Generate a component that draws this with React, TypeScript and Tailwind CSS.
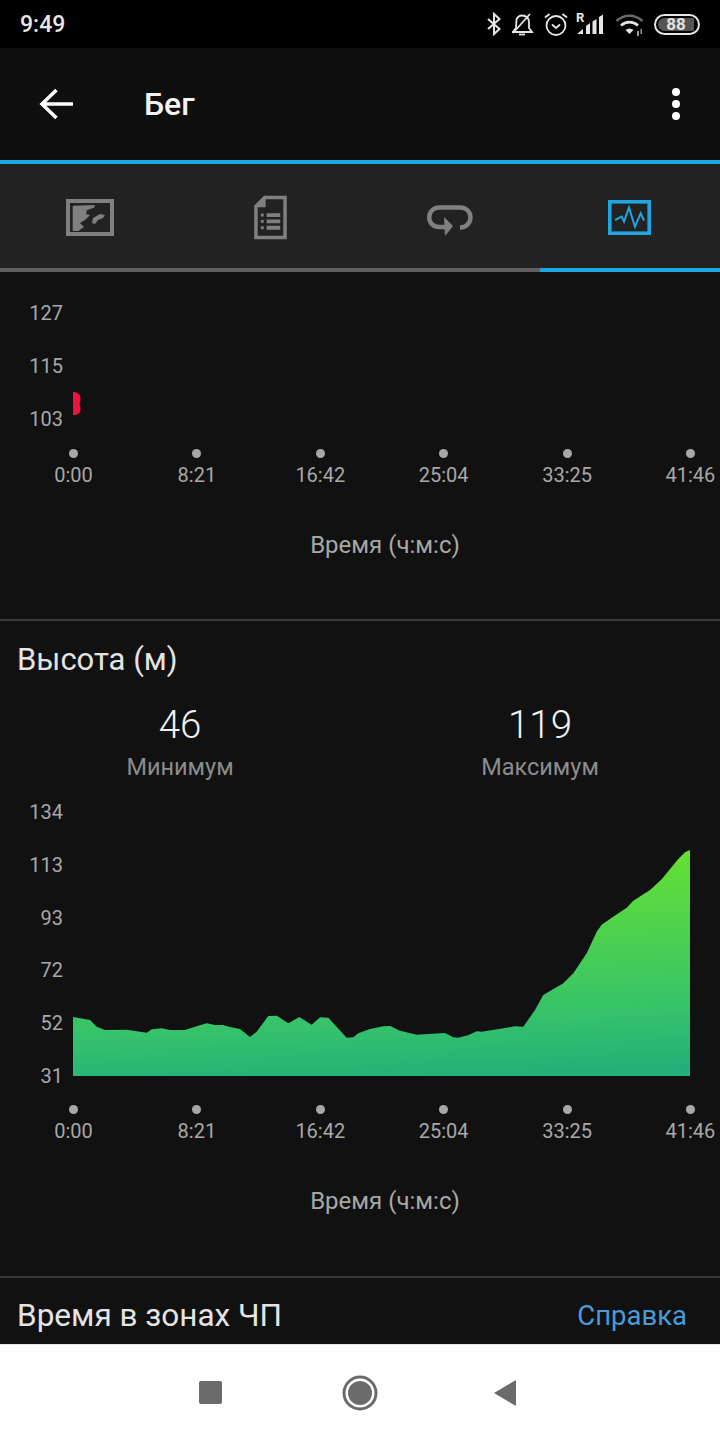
const TICKS = ["0:00", "8:21", "16:42", "25:04", "33:25", "41:46"];

const ELEVATION =
  "M73 1076L73 1017L90 1020L96.7 1026.7L105 1030L126.7 1029.7L146.7 1032.7L151.7 1029.3L161.7 1028.3L170 1030L185 1030L195 1026.7L206.7 1023.3L215 1025L223 1025L230 1027L240 1029L250 1037L256.7 1031.7L268.3 1016L276.7 1015.7L288.3 1023.3L299.3 1017L311.7 1024.7L320 1017.3L328.3 1017.7L346.7 1037.7L353.3 1037.3L358.3 1033.3L370 1029L383.3 1026.3L390 1026L400 1030.7L416.7 1034.7L445 1033L453.3 1037.3L458 1037.7L468 1035.3L476.7 1031.3L481.7 1031.7L506.7 1027.7L515 1026.3L523.3 1026.7L535 1010L543.3 995L563.3 983.3L573.3 973.3L586.7 953.3L596.7 931.7L601.7 924.7L611.7 917.7L626.7 907.7L633.3 900.7L650 890L661.7 879.3L678.3 859L685 852.3L690 850L690 1076Z";

function YLabels({ labels, gap }: { labels: string[]; gap: string }) {
  return (
    <div className={`flex w-[63px] flex-col items-end ${gap}`}>
      {labels.map((l) => (
        <span key={l} className="h-[26px] text-[20px] leading-[26px] text-[#a8a8a8]">
          {l}
        </span>
      ))}
    </div>
  );
}

function TimeAxis() {
  return (
    <>
      <div className="ml-[73.5px] flex w-[617px] justify-between">
        {TICKS.map((t) => (
          <div key={t} className="flex w-0 flex-col items-center">
            <span className="h-[9px] w-[9px] flex-none rounded-full bg-[#a8a8a8]" />
            <span className="mt-[4px] h-[26px] whitespace-nowrap text-[20px] leading-[26px] text-[#a8a8a8]">{t}</span>
          </div>
        ))}
      </div>
      <div className="mt-[42px] h-[30px] pl-[50px] text-center text-[24px] leading-[30px] text-[#a8a8a8]">Время (ч:м:с)</div>
    </>
  );
}

function Stat({ value, label }: { value: string; label: string }) {
  return (
    <div className="flex flex-col items-center">
      <span className="h-[46px] text-[38.5px] font-light leading-[46px] text-[#f0f0f0]">{value}</span>
      <span className="mt-[3px] h-[32px] text-[23.5px] leading-[32px] text-[#8c8c8c]">{label}</span>
    </div>
  );
}

function StatusIcons() {
  return (
    <div className="flex items-center">
      <svg width="16" height="24" viewBox="0 0 16 24" fill="none" stroke="#e6e6e6" strokeWidth="2" className="-ml-px">
        <path d="M2 7L13.5 17L8 22V2L13.5 7L2 17" />
      </svg>
      <svg width="24" height="24" viewBox="0 0 24 24" fill="none" stroke="#e6e6e6" strokeWidth="1.8" className="ml-[8px]">
        <path d="M2 20H22L19 16V10C19 6 16 3.5 12 3.5C9.5 3.5 7.5 5 6.5 7.5L6 16L3 20" />
        <path d="M9 22.5H15" />
        <path d="M3 21L20 2" />
      </svg>
      <svg width="26" height="24" viewBox="0 0 26 24" fill="none" stroke="#e6e6e6" strokeWidth="1.8" className="ml-[9px]">
        <circle cx="13" cy="13.5" r="9.5" />
        <path d="M9 12.5L13 16L17 12.5" />
        <path d="M2 5.5L6.5 2M24 5.5L19.5 2" />
      </svg>
      <div className="relative ml-[7px] h-[24px] w-[30px]">
        <span className="absolute left-0 top-[-1px] text-[13px] font-bold leading-[14px] text-[#e6e6e6]">R</span>
        <svg width="30" height="24" viewBox="0 0 30 24" fill="#e6e6e6" className="absolute left-0 top-0">
          <path d="M1 22L7 17V22ZM10 14L14 11V22H10ZM16.5 9.5L20.5 7V22H16.5ZM23 5L27 2.5V22H23Z" />
        </svg>
      </div>
      <svg width="30" height="24" viewBox="0 0 30 24" fill="none" className="ml-[9px]">
        <path d="M1.5 9C9 2 20 2 27.5 9" stroke="#6a6a6a" strokeWidth="2.6" />
        <path d="M6 13.5C11 9 18 9 23 13.5" stroke="#e6e6e6" strokeWidth="2.6" />
        <path d="M10.5 18C13 16 16 16 18.5 18L14.5 22Z" fill="#e6e6e6" />
        <path d="M22 19H24V24H22ZM25.5 17H27V22H25.5Z" fill="#9a9a9a" />
      </svg>
      <div className="ml-[9px] flex h-[21px] w-[46px] items-center rounded-full border-2 border-[#e6e6e6] p-[2px]">
        <div className="flex h-full w-[36px] items-center justify-center rounded-l-full bg-[#555555] text-[17px] font-bold leading-none text-[#e2e2e2]">
          88
        </div>
      </div>
    </div>
  );
}

export default function App() {
  return (
    <div className="flex h-[1440px] w-[720px] flex-col overflow-hidden bg-[#111112] font-['Roboto',sans-serif]">
      {/* status bar */}
      <div className="flex h-[48px] flex-none items-center justify-between bg-black pl-[20px] pr-[20px]">
        <span className="text-[23px] font-medium leading-none text-[#e6e6e6]">9:49</span>
        <StatusIcons />
      </div>

      {/* toolbar */}
      <div className="flex h-[112px] flex-none items-center bg-[#0f0f0f] pl-[39px] pr-[40px]">
        <svg width="34" height="32" viewBox="0 0 34 32" fill="none" stroke="#ffffff" strokeWidth="3.6">
          <path d="M34 16H3M17.5 2L3 16L17.5 30" />
        </svg>
        <span className="ml-[71px] text-[32px] font-medium leading-none text-[#f2f2f2]">Бег</span>
        <div className="ml-auto flex flex-col gap-[4px]">
          <span className="h-[8px] w-[8px] rounded-full bg-white" />
          <span className="h-[8px] w-[8px] rounded-full bg-white" />
          <span className="h-[8px] w-[8px] rounded-full bg-white" />
        </div>
      </div>

      {/* tabs */}
      <div className="h-[4px] flex-none bg-[#1fa5e0]" />
      <div className="grid h-[104px] flex-none grid-cols-4 items-center justify-items-center bg-[#222222]">
        <svg width="48" height="37" viewBox="0 0 48 37" className="mt-[2px]">
          <rect x="2" y="2" width="44" height="33" fill="none" stroke="#808080" strokeWidth="4" />
          <path d="M6.7 6.7L29 6L28 8.7L21 11L20 15L24 16L19 21L14 24L18 28L12.3 32H6.7Z" fill="#808080" />
          <path d="M26 24L27 19L34 15L39 16L37 19L32 21L29 25Z" fill="#808080" />
        </svg>
        <svg width="33" height="45" viewBox="0 0 34 45" className="mt-[2px]">
          <path d="M11 2H32V43H2V11Z" fill="none" stroke="#808080" strokeWidth="3.6" />
          <path d="M12 1V12H1Z" fill="#808080" />
          <path d="M7 18.5H10V21.5H7ZM13 18H27V22H13ZM7 25H10V28H7ZM13 24.5H27V28.5H13ZM7 31.5H10V34.5H7ZM13 31H27V35H13Z" fill="#808080" />
        </svg>
        <svg width="46" height="31" viewBox="0 0 46 31" fill="none" className="mt-[9px]">
          <path d="M33 22.5C39 22.5 43.5 18 43.5 12.5C43.5 6.5 39 2.5 33 2.5H12.5C6.5 2.5 2.2 6.5 2.2 12.5C2.2 18 6.5 22 12.5 22H20" stroke="#808080" strokeWidth="4.4" />
          <path d="M17 12L26 21L18 31Z" fill="#808080" />
        </svg>
        <svg width="43" height="35" viewBox="0 0 43 35" fill="none" className="mr-[1px] mt-[2px]">
          <rect x="1.8" y="1.8" width="39.4" height="31.4" stroke="#1fa5e0" strokeWidth="3.6" />
          <path d="M7 20L13.7 16.7L16 21.7L21 7.7L27 26.7L32.7 13.3L36 20.7" stroke="#1fa5e0" strokeWidth="2" />
        </svg>
      </div>
      <div className="flex h-[4px] flex-none">
        <div className="w-[540px] bg-[#606060]" />
        <div className="flex-1 bg-[#1fa5e0]" />
      </div>

      {/* scrolled content */}
      <div className="min-h-0 flex-1 overflow-hidden">
        <div className="pt-[28px]">
          <div className="flex">
            <YLabels labels={["127", "115", "103"]} gap="gap-[27px]" />
            <svg width="657" height="132" viewBox="63 300 657 132" className="flex-none">
              <path d="M73 392C78 392 80.5 394 80.5 399C80.5 402 79.5 403 79.5 404C79.5 405 80.5 406 80.5 409C80.5 413 78 415 73 415Z" fill="#f0123c" />
            </svg>
          </div>
          <div className="mt-[17px]">
            <TimeAxis />
          </div>
        </div>

        <div className="mt-[59px] h-[2px] bg-[#3a3a3a]" />

        <div className="px-[17px] pt-[20px] text-[31px] leading-[38px] text-[#e4e4e4]">Высота (м)</div>
        <div className="mt-[23px] grid grid-cols-2">
          <Stat value="46" label="Минимум" />
          <Stat value="119" label="Максимум" />
        </div>
        <div className="mt-[16px] flex">
          <YLabels labels={["134", "113", "93", "72", "52", "31"]} gap="gap-[26.8px]" />
          <svg width="657" height="290" viewBox="63 799 657 290" className="flex-none">
            <defs>
              <linearGradient id="elevation" gradientUnits="userSpaceOnUse" x1="480" y1="1076" x2="470" y2="850">
                <stop offset="0" stopColor="#24af78" />
                <stop offset="0.25" stopColor="#35c26b" />
                <stop offset="1" stopColor="#68e22f" />
              </linearGradient>
            </defs>
            <path d={ELEVATION} fill="url(#elevation)" />
          </svg>
        </div>
        <div className="mt-[16px]">
          <TimeAxis />
        </div>

        <div className="mt-[60px] h-[2px] bg-[#3a3a3a]" />

        <div className="flex items-center justify-between pl-[17px] pr-[33px] pt-[19px]">
          <span className="text-[31.5px] leading-[38px] text-[#e4e4e4]">Время в зонах ЧП</span>
          <span className="text-[27.5px] leading-[38px] text-[#4b9bd8]">Справка</span>
        </div>
      </div>

      {/* android nav */}
      <div className="flex h-[96px] flex-none items-center border-t border-[#e8e8e8] bg-white pl-[199px]">
        <span className="h-[23px] w-[23px] rounded-[2px] bg-[#6b6b6b]" />
        <svg width="36" height="36" viewBox="0 0 36 36" className="ml-[120px]">
          <circle cx="18" cy="18" r="16" fill="none" stroke="#6b6b6b" strokeWidth="3" />
          <circle cx="18" cy="18" r="12" fill="#6b6b6b" />
        </svg>
        <svg width="24" height="26" viewBox="0 0 24 26" className="ml-[115px]">
          <path d="M1 13L22 0.5C23 0.5 23 1 23 2V24C23 25 23 25.5 22 25.5Z" fill="#6b6b6b" />
        </svg>
      </div>
    </div>
  );
}
